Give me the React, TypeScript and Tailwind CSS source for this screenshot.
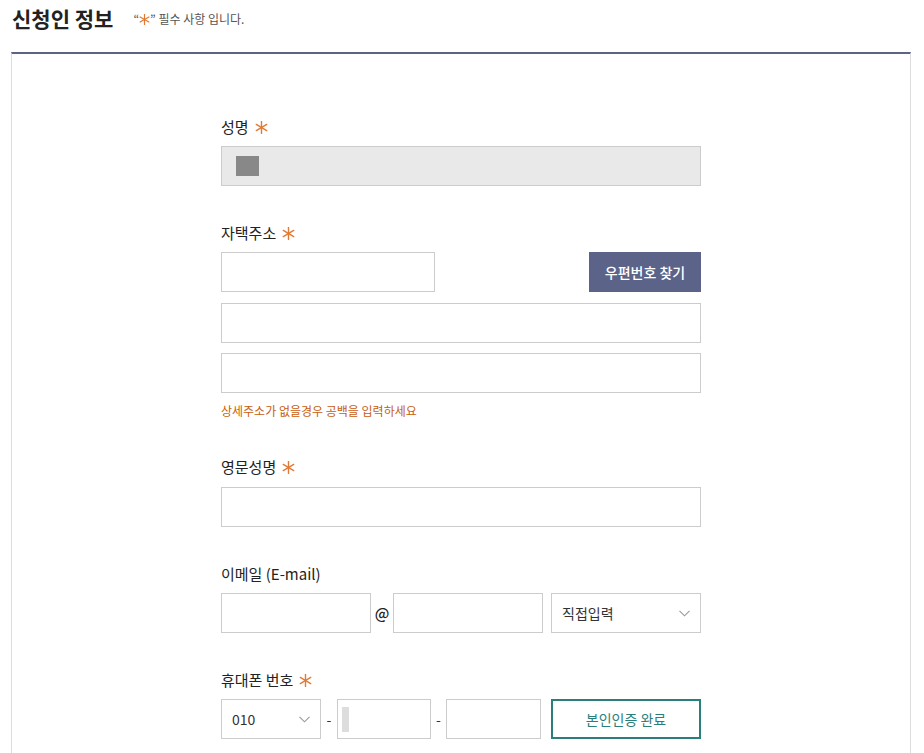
import React from "react";

const Star = ({ size = 12 }: { size?: number }) => (
  <svg width={size} height={size} viewBox="0 0 12 12" className="inline-block" aria-hidden>
    <g stroke="#e07a36" strokeWidth="1.3" strokeLinecap="round">
      <line x1="6" y1="0.5" x2="6" y2="11.5" />
      <line x1="1.2" y1="3.2" x2="10.8" y2="8.8" />
      <line x1="1.2" y1="8.8" x2="10.8" y2="3.2" />
    </g>
  </svg>
);

const Chevron = () => (
  <svg width="11" height="7" viewBox="0 0 11 7" aria-hidden>
    <polyline points="0.5,0.8 5.5,5.8 10.5,0.8" fill="none" stroke="#999" strokeWidth="1.1" />
  </svg>
);

const Label = ({ text, req = false }: { text: string; req?: boolean }) => (
  <div className="flex items-center gap-[6px] h-[22px] text-[15px] leading-[22px] text-[#222]">
    <span>{text}</span>
    {req && <Star size={13} />}
  </div>
);

const Box = ({ className = "" }: { className?: string }) => (
  <div className={"h-[40px] border border-[#cccccc] bg-white " + className} />
);

export default function App() {
  return (
    <div
      className="w-[924px] h-[753px] overflow-hidden bg-white"
      style={{ fontFamily: '"Noto Sans CJK KR", "Noto Sans", sans-serif' }}
    >
      <div className="h-[52px] flex items-start pt-[4px] pl-[12px]">
        <h2 className="text-[21px] leading-[28px] font-bold text-[#222]">신청인 정보</h2>
        <div className="ml-[20px] mt-[6px] flex items-center text-[12px] leading-[18px] text-[#555]">
          <span>“</span>
          <Star size={11} />
          <span>” 필수 사항 입니다.</span>
        </div>
      </div>
      <div className="ml-[11px] w-[900px] h-[701px] border-t-2 border-t-[#5b6389] border-x border-x-[#dddddd]">
        <div className="mx-auto w-[480px] pt-[62px]">
          {/* 성명 */}
          <Label text="성명" req />
          <div className="mt-[8px] h-[40px] border border-[#cccccc] bg-[#e9e9e9] flex items-center pl-[14px]">
            <div className="w-[23px] h-[20px] bg-[#888888]" />
          </div>

          {/* 자택주소 */}
          <div className="mt-[36px]">
            <Label text="자택주소" req />
          </div>
          <div className="mt-[8px] flex justify-between">
            <Box className="w-[214px]" />
            <button className="w-[112px] h-[40px] bg-[#5b6389] text-white text-[14px] font-medium">
              우편번호 찾기
            </button>
          </div>
          <Box className="mt-[11px]" />
          <Box className="mt-[10px]" />
          <div className="mt-[9px] text-[12px] leading-[18px] text-[#c95d0e]">
            상세주소가 없을경우 공백을 입력하세요
          </div>

          {/* 영문성명 */}
          <div className="mt-[36px]">
            <Label text="영문성명" req />
          </div>
          <Box className="mt-[9px]" />

          {/* 이메일 */}
          <div className="mt-[36px]">
            <Label text="이메일 (E-mail)" />
          </div>
          <div className="mt-[8px] flex items-center">
            <Box className="w-[150px]" />
            <div className="w-[22px] text-center text-[15px] font-medium text-[#222]">@</div>
            <Box className="w-[150px]" />
            <div className="ml-[8px] w-[150px] h-[40px] border border-[#cccccc] flex items-center justify-between pl-[10px] pr-[10px] text-[14px] text-[#333]">
              <span>직접입력</span>
              <Chevron />
            </div>
          </div>

          {/* 휴대폰 */}
          <div className="mt-[36px]">
            <Label text="휴대폰 번호" req />
          </div>
          <div className="mt-[8px] flex items-center">
            <div className="w-[100px] h-[40px] border border-[#cccccc] flex items-center justify-between pl-[10px] pr-[10px] text-[14px] text-[#333]">
              <span>010</span>
              <Chevron />
            </div>
            <div className="w-[16px] text-center text-[14px] text-[#333]">-</div>
            <div className="w-[94px] h-[40px] border border-[#cccccc] flex items-center pl-[4px]">
              <div className="w-[7px] h-[25px] bg-[#dddddd]" />
            </div>
            <div className="w-[15px] text-center text-[14px] text-[#333]">-</div>
            <Box className="w-[95px]" />
            <button className="ml-[10px] w-[150px] h-[40px] border-2 border-[#2b7f7b] text-[#2b7f7b] text-[14px]">
              본인인증 완료
            </button>
          </div>
        </div>
      </div>
    </div>
  );
}
